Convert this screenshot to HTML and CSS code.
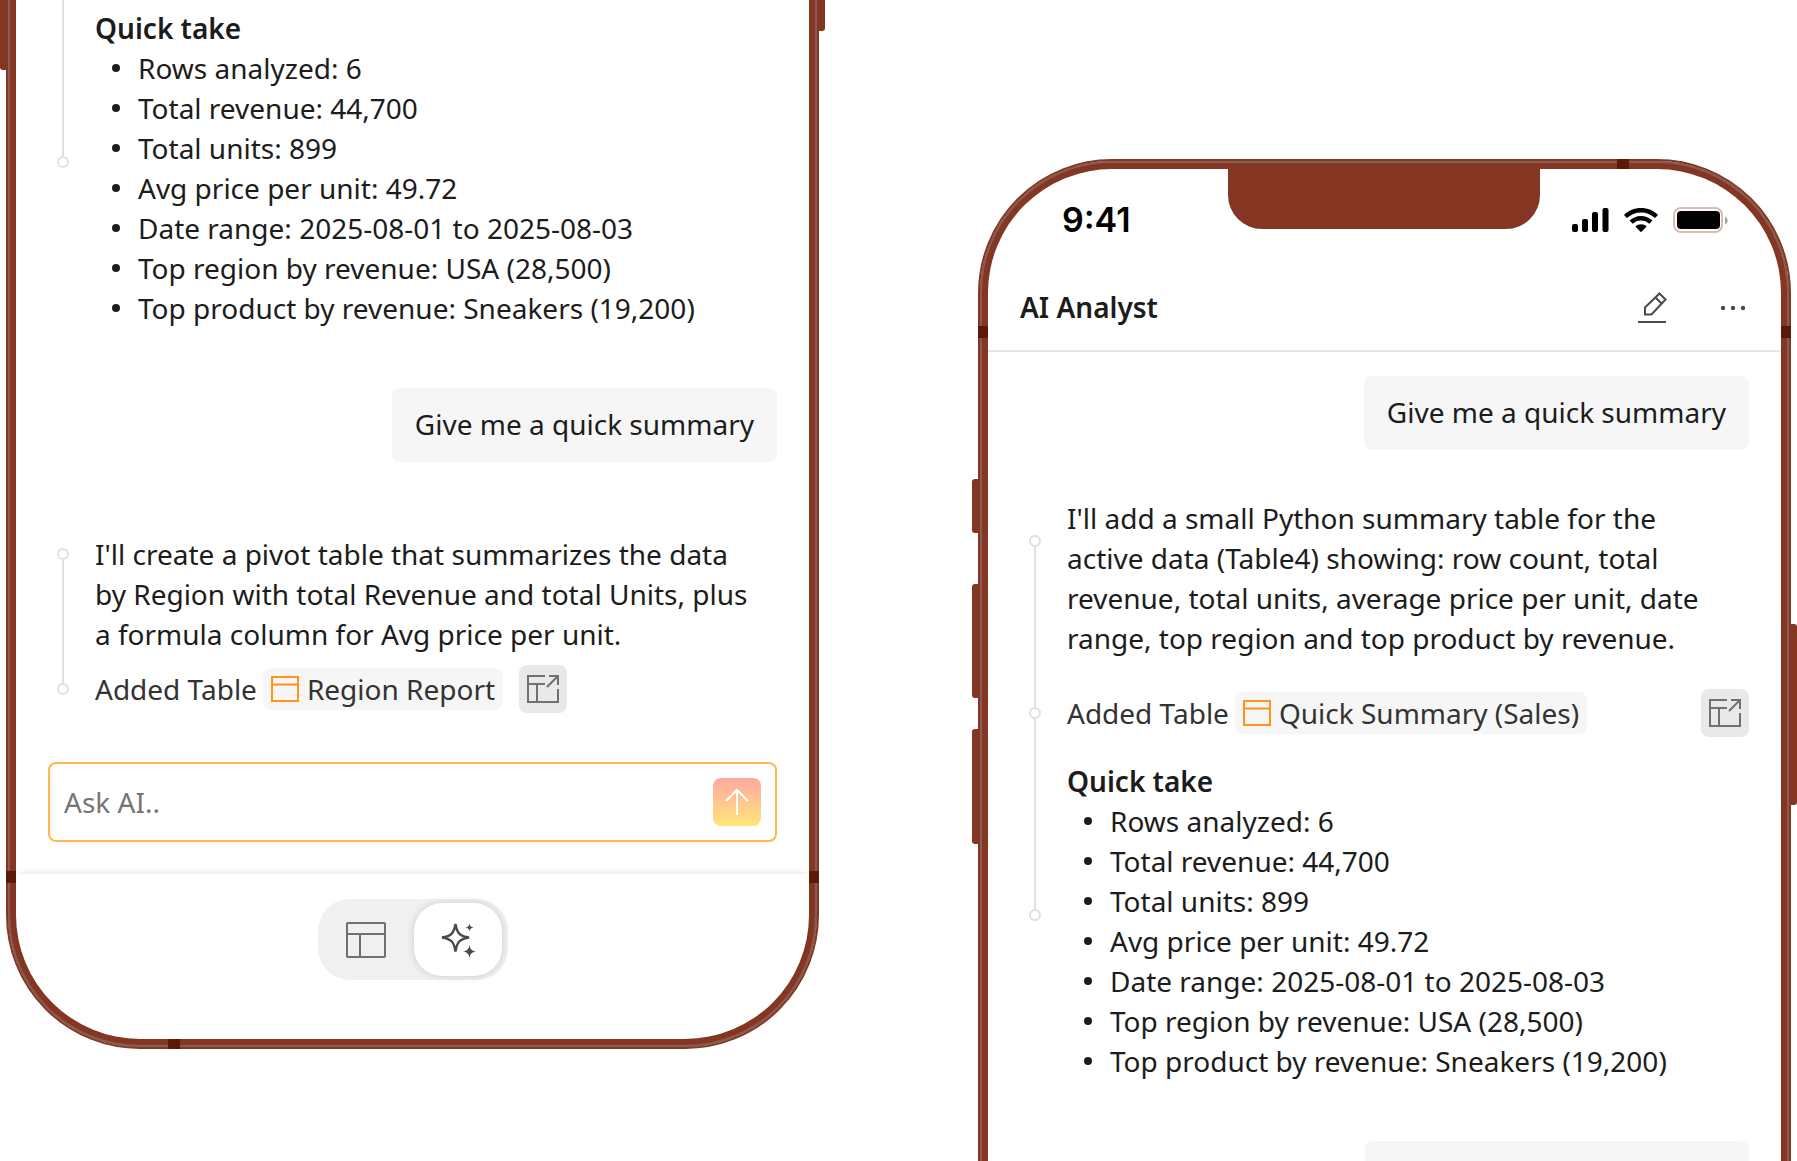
FILE: index.html
```html
<!DOCTYPE html>
<html lang="en">
<head>
  <meta charset="UTF-8">
  <meta name="viewport" content="width=device-width, initial-scale=1.0">
  <title>AI Analyst</title>
  <link rel="stylesheet" href="styles.css">
</head>
<body>
  <main class="stage">

    <section class="phone phone-lower">
      <span class="key key-left"></span>
      <span class="key key-right"></span>
      <span class="band band-left"></span>
      <span class="band band-right"></span>
      <span class="band band-edge"></span>

      <div class="chat">
        <div class="answer">
          <div class="rail rail-open">
            <span class="line"></span>
            <span class="dot"></span>
          </div>
          <div class="answer-body">
            <h2>Quick take</h2>
            <ul>
              <li>Rows analyzed: 6</li>
              <li>Total revenue: 44,700</li>
              <li>Total units: 899</li>
              <li>Avg price per unit: 49.72</li>
              <li>Date range: 2025-08-01 to 2025-08-03</li>
              <li>Top region by revenue: USA (28,500)</li>
              <li>Top product by revenue: Sneakers (19,200)</li>
            </ul>
          </div>
        </div>

        <p class="bubble">Give me a quick summary</p>

        <div class="answer">
          <div class="rail rail-short">
            <span class="dot"></span>
            <span class="line"></span>
            <span class="dot"></span>
          </div>
          <div class="answer-body">
            <p>I'll create a pivot table that summarizes the data<br>by Region with total Revenue and total Units, plus<br>a formula column for Avg price per unit.</p>
            <div class="added">
              <span>Added Table</span>
              <a class="chip" href="#">
                <svg width="28" height="26" viewBox="0 0 28 26" fill="none" stroke="#ff9416" stroke-width="2"><rect x="1" y="1" width="26" height="24"/><path d="M1 8.500h26"/></svg>
                Region Report
              </a>
              <button class="open" type="button" aria-label="Open table">
                <svg width="34" height="30" viewBox="0 0 34 30" fill="none" stroke="#707070" stroke-width="2"><path d="M19 2H2v26h30V15M2 10h17M11 10v18"/><path d="M21 13 32 2M23 2h9v9"/></svg>
              </button>
            </div>
          </div>
        </div>

        <form class="composer">
          <input type="text" placeholder="Ask AI.." aria-label="Ask AI">
          <button type="button" aria-label="Send">
            <svg width="24" height="28" viewBox="0 0 24 28" fill="none" stroke="#fff" stroke-width="2"><path d="M12 27V2M1 13 12 2l11 11"/></svg>
          </button>
        </form>
      </div>

      <nav class="tabs">
        <div class="switch">
          <button type="button" aria-label="Table">
            <svg width="40" height="36" viewBox="0 0 40 36" fill="none" stroke="#707070" stroke-width="2"><rect x="1" y="1" width="38" height="34" rx="1"/><path d="M1 12h38M14 12v23"/></svg>
          </button>
          <button type="button" class="active" aria-label="AI Analyst">
            <svg width="36" height="36" viewBox="0 0 36 36" fill="#4a4a4a"><path d="M15.500 2c1.500 9 4 12 13.500 13.500C19.500 17 17 20 15.500 29.500 14 20 11.500 17 2 15.500 11.500 14 14 11 15.500 2Z" fill="none" stroke="#4a4a4a" stroke-width="2.400"/><path d="M29.500 1.500c.5 2.700 1.300 3.500 4 4-2.700.5-3.500 1.300-4 4-.5-2.700-1.300-3.500-4-4 2.700-.5 3.500-1.300 4-4ZM29.500 23c.8 4.300 2.200 5.700 6.500 6.500-4.300.8-5.700 2.200-6.500 6.500-.8-4.300-2.200-5.700-6.500-6.500 4.300-.8 5.700-2.200 6.500-6.500Z"/></svg>
          </button>
        </div>
      </nav>
    </section>

    <section class="phone phone-upper">
      <span class="key key-mute"></span>
      <span class="key key-up"></span>
      <span class="key key-down"></span>
      <span class="key key-power"></span>
      <span class="band band-left"></span>
      <span class="band band-right"></span>
      <span class="band band-edge"></span>
      <span class="notch"></span>

      <div class="status">
        <span class="time">9:41</span>
        <div class="status-icons">
          <svg width="37" height="26" viewBox="0 0 37 26"><rect x="0" y="17" width="6" height="8" rx="2"/><rect x="10" y="12" width="6" height="13" rx="2"/><rect x="20" y="5" width="6" height="20" rx="2"/><rect x="30.500" y="1" width="6" height="24" rx="2"/></svg>
          <svg width="34" height="26" viewBox="0 0 34 26"><path d="M17 1c6.500 0 12.500 2.500 17 6.900L31 11C27.200 7.400 22.300 5.400 17 5.400S6.800 7.400 3 11L0 7.900C4.500 3.500 10.500 1 17 1Z"/><path d="M17 9c4.400 0 8.400 1.700 11.400 4.600l-3.100 3.100C23.100 14.600 20.200 13.400 17 13.400s-6.100 1.200-8.300 3.300l-3.100-3.100C8.600 10.700 12.600 9 17 9Z"/><path d="M17 17.200c2.200 0 4.200.8 5.700 2.200L17 25.200l-5.700-5.800c1.500-1.400 3.500-2.200 5.700-2.200Z"/></svg>
          <svg width="55" height="26" viewBox="0 0 55 26"><rect x="1" y="1" width="48" height="24" rx="7" fill="none" stroke="#dbbbb4" stroke-width="2"/><rect x="4" y="4" width="43" height="18" rx="4"/><path d="M52 9.500c3.500 1.500 3.500 6.500 0 8Z" fill="#a5a5a5"/></svg>
        </div>
      </div>

      <header class="topbar">
        <h1>AI Analyst</h1>
        <div class="actions">
          <button type="button" aria-label="New chat">
            <svg width="32" height="32" viewBox="0 0 32 32" fill="none" stroke="#4a4a4a" stroke-width="2"><path d="M8 23.500v-7L22.500 2.500l6 6L14.500 23.500ZM18.500 6.500l6 6"/><path d="M1 31h28"/></svg>
          </button>
          <button type="button" aria-label="More">
            <svg width="32" height="32" viewBox="0 0 32 32" fill="#4a4a4a"><circle cx="6" cy="17" r="2.200"/><circle cx="16" cy="17" r="2.200"/><circle cx="26" cy="17" r="2.200"/></svg>
          </button>
        </div>
      </header>

      <div class="chat">
        <p class="bubble">Give me a quick summary</p>

        <div class="answer">
          <div class="rail rail-full">
            <span class="dot"></span>
            <span class="line"></span>
            <span class="dot"></span>
            <span class="line"></span>
            <span class="dot"></span>
          </div>
          <div class="answer-body">
            <p>I'll add a small Python summary table for the<br>active data (Table4) showing: row count, total<br>revenue, total units, average price per unit, date<br>range, top region and top product by revenue.</p>
            <div class="added">
              <span>Added Table</span>
              <a class="chip" href="#">
                <svg width="28" height="26" viewBox="0 0 28 26" fill="none" stroke="#ff9416" stroke-width="2"><rect x="1" y="1" width="26" height="24"/><path d="M1 8.500h26"/></svg>
                Quick Summary (Sales)
              </a>
              <button class="open" type="button" aria-label="Open table">
                <svg width="34" height="30" viewBox="0 0 34 30" fill="none" stroke="#707070" stroke-width="2"><path d="M19 2H2v26h30V15M2 10h17M11 10v18"/><path d="M21 13 32 2M23 2h9v9"/></svg>
              </button>
            </div>
            <h2>Quick take</h2>
            <ul>
              <li>Rows analyzed: 6</li>
              <li>Total revenue: 44,700</li>
              <li>Total units: 899</li>
              <li>Avg price per unit: 49.72</li>
              <li>Date range: 2025-08-01 to 2025-08-03</li>
              <li>Top region by revenue: USA (28,500)</li>
              <li>Top product by revenue: Sneakers (19,200)</li>
            </ul>
          </div>
        </div>

        <div class="bubble"></div>
      </div>
    </section>

  </main>
</body>
</html>
```
FILE: styles.css
```css
* {
  box-sizing: border-box;
}
body {
  margin: 0;
  background: #fff;
  color: #1c1c1c;
  font-family: "Noto Sans", sans-serif;
  font-size: 28px;
  line-height: 40px;
}
h1, h2, p, ul {
  margin: 0;
  padding: 0;
  font-size: 28px;
}
h1, h2 {
  font-weight: 600;
}
button {
  display: flex;
  align-items: center;
  justify-content: center;
  padding: 0;
  border: none;
  background: none;
  cursor: pointer;
}
svg {
  display: block;
  flex: none;
}
.stage {
  display: flex;
  align-items: flex-start;
  gap: 159px;
  height: 100vh;
  padding: 0 6px;
  overflow: hidden;
}

/* phone frame */
.phone {
  position: relative;
  flex: 1;
  min-width: 0;
  padding: 8px;
  border: 2px solid #853623;
  box-shadow: inset 0 0 0 2px #865d52, inset 0 0 0 8px #853623;
}
.phone-lower {
  margin-top: -10px;
  border-radius: 0 0 134px 134px;
}
.phone-upper {
  margin-top: 159px;
  border-radius: 134px 134px 0 0;
}
.key {
  position: absolute;
  width: 6px;
  background: #853623;
}
.key-left, .key-mute, .key-up, .key-down {
  left: -8px;
  border-radius: 3px 0 0 3px;
}
.key-right, .key-power {
  right: -8px;
  border-radius: 0 3px 3px 0;
}
.key-left {
  top: 0;
  height: 78px;
}
.key-right {
  top: 0;
  height: 39px;
}
.key-mute {
  top: 318px;
  height: 54px;
}
.key-up {
  top: 423px;
  height: 114px;
}
.key-down {
  top: 568px;
  height: 115px;
}
.key-power {
  top: 463px;
  height: 181px;
}
.band {
  position: absolute;
  width: 10px;
  height: 12px;
  background: #5a1a08;
}
.band-left {
  left: -2px;
}
.band-right {
  right: -2px;
}
.phone-lower .band-left, .phone-lower .band-right {
  bottom: 164px;
}
.phone-upper .band-left, .phone-upper .band-right {
  top: 165px;
}
.band-edge {
  width: 12px;
  height: 10px;
}
.phone-lower .band-edge {
  left: 160px;
  bottom: -2px;
}
.phone-upper .band-edge {
  right: 160px;
  top: -2px;
}
.notch {
  position: absolute;
  top: 4px;
  left: 50%;
  width: 312px;
  height: 64px;
  margin-left: -157px;
  border-radius: 0 0 34px 34px;
  background: #853623;
}

/* status bar and header */
.status {
  display: flex;
  align-items: center;
  justify-content: space-between;
  height: 102px;
  padding: 0 53px 0 74px;
}
.time {
  color: #000;
  font-family: Inter, sans-serif;
  font-size: 34px;
  font-weight: 600;
}
.status-icons {
  display: flex;
  align-items: center;
  gap: 15px;
}
.topbar {
  display: flex;
  align-items: center;
  justify-content: space-between;
  padding: 16px 32px 23px;
  border-bottom: 2px solid #e6e6e6;
}
.actions {
  display: flex;
  gap: 48px;
}

/* conversation */
.chat {
  display: flex;
  flex-direction: column;
  padding: 0 32px;
}
.phone-lower .chat {
  padding: 8px 32px 32px;
}
.phone-upper .chat {
  padding-top: 24px;
}
.bubble {
  align-self: flex-end;
  min-width: 384px;
  min-height: 74px;
  padding: 16px 23px 18px;
  border-radius: 8px;
  background: #f6f6f6;
}
.phone-upper .bubble + .answer {
  margin-top: 48px;
}
.phone-lower .bubble + .answer {
  margin-top: 72px;
}
.answer + .bubble {
  margin-top: 60px;
}
.answer {
  display: grid;
  grid-template-columns: 30px 1fr;
  column-gap: 17px;
}
.rail {
  display: flex;
  flex-direction: column;
  align-items: center;
}
.rail-open {
  margin: -8px 0 160px;
}
.rail-short {
  margin: 14px 0 18px;
}
.rail-full {
  margin: 37px 0 160px;
}
.dot {
  width: 12px;
  height: 12px;
  border: 2px solid #e0e0e0;
  border-radius: 50%;
}
.line {
  flex: 16;
  width: 2px;
  background: #e0e0e0;
}
.line ~ .line {
  flex: 19;
}
.answer-body p {
  white-space: nowrap;
}
.added {
  display: flex;
  align-items: center;
  color: #333;
  white-space: nowrap;
}
.phone-lower .added {
  margin-top: 11px;
}
.phone-upper .added {
  margin: 31px 0 24px;
}
.chip {
  display: flex;
  align-items: center;
  gap: 8px;
  height: 42px;
  margin-left: 6px;
  padding: 0 8px;
  border-radius: 8px;
  background: #f6f6f6;
  color: #333;
  text-decoration: none;
}
.open {
  width: 48px;
  height: 48px;
  margin-left: 16px;
  border-radius: 8px;
  background: #e9e9e9;
}
.phone-upper .open {
  margin-left: auto;
}
ul {
  list-style: none;
}
li {
  display: flex;
  align-items: center;
  gap: 18px;
  padding-left: 17px;
  white-space: nowrap;
}
li::before {
  content: "";
  width: 8px;
  height: 8px;
  border-radius: 50%;
  background: #1c1c1c;
}

/* prompt box */
.composer {
  display: flex;
  align-items: center;
  height: 80px;
  margin-top: 49px;
  padding: 0 14px;
  border: 2px solid #ffb750;
  border-radius: 8px;
}
.composer input {
  flex: 1;
  min-width: 0;
  padding: 0;
  border: none;
  outline: none;
  background: none;
  font: inherit;
}
.composer input::placeholder {
  color: #757575;
}
.composer button {
  width: 48px;
  height: 48px;
  border-radius: 8px;
  background: linear-gradient(#ffa8a0, #ffe57c);
}

/* bottom switch */
.tabs {
  display: flex;
  justify-content: center;
  padding: 25px 0 59px;
  border-radius: 0 0 124px 124px;
  box-shadow: 0 -3px 6px -2px rgba(0, 0, 0, 0.1);
}
.switch {
  display: flex;
  gap: 4px;
  padding: 4px 6px 4px 4px;
  border-radius: 32px;
  background: #f0f0f0;
}
.switch button {
  width: 88px;
  height: 73px;
  border-radius: 28px;
}
.switch .active {
  background: #fff;
  box-shadow: 0 0 8px rgba(0, 0, 0, 0.15);
}
```
